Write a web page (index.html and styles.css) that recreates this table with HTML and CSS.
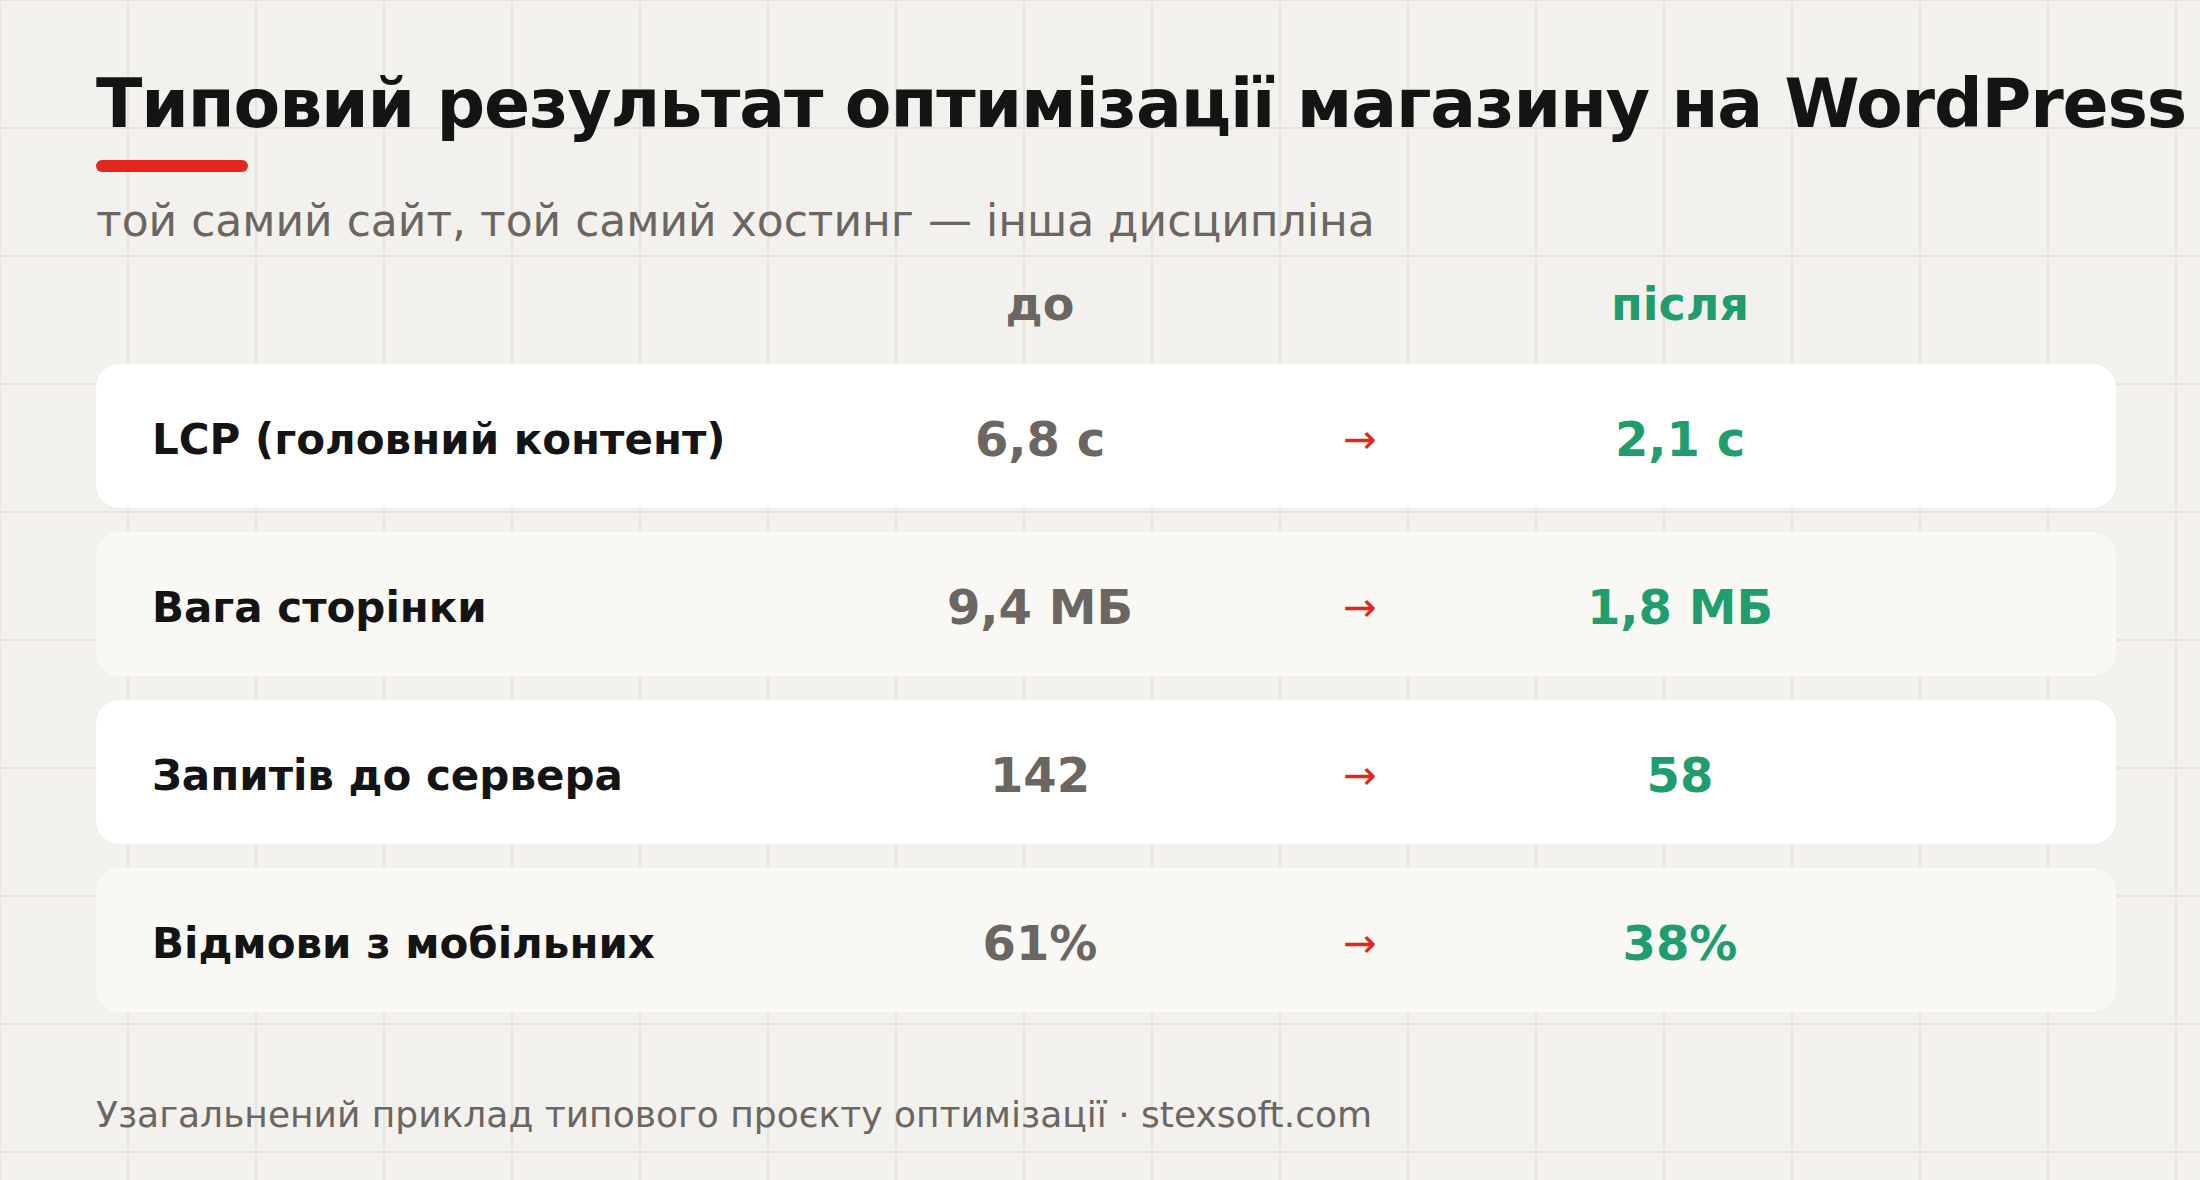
FILE: index.html
```html
<!DOCTYPE html>
<html lang="uk">
<head>
<meta charset="utf-8">
<title>Типовий результат оптимізації магазину на WordPress</title>
<link rel="stylesheet" href="styles.css">
</head>
<body>
<main class="page">
  <h1 class="title">Типовий результат оптимізації магазину на WordPress</h1>
  <div class="accent"></div>
  <p class="subtitle">той самий сайт, той самий хостинг — інша дисципліна</p>

  <div class="head-row">
    <span></span>
    <span class="col-before">до</span>
    <span></span>
    <span class="col-after">після</span>
  </div>

  <div class="rows">
    <div class="row row-light">
      <span class="label">LCP (головний контент)</span>
      <span class="before">6,8 с</span>
      <span class="arrow">→</span>
      <span class="after">2,1 с</span>
    </div>
    <div class="row row-warm">
      <span class="label">Вага сторінки</span>
      <span class="before">9,4 МБ</span>
      <span class="arrow">→</span>
      <span class="after">1,8 МБ</span>
    </div>
    <div class="row row-light">
      <span class="label">Запитів до сервера</span>
      <span class="before">142</span>
      <span class="arrow">→</span>
      <span class="after">58</span>
    </div>
    <div class="row row-warm">
      <span class="label">Відмови з мобільних</span>
      <span class="before">61%</span>
      <span class="arrow">→</span>
      <span class="after">38%</span>
    </div>
  </div>

  <p class="footer">Узагальнений приклад типового проєкту оптимізації · stexsoft.com</p>
</main>
</body>
</html>
```
FILE: styles.css
```css
* { box-sizing: border-box; }

html, body {
  margin: 0;
  padding: 0;
}

body {
  width: 2200px;
  height: 1180px;
  overflow: hidden;
  font-family: "DejaVu Sans", "Noto Sans", sans-serif;
  background-color: #f3f1ed;
  background-image:
    linear-gradient(to right, #e8e3de 2px, transparent 2px),
    linear-gradient(to bottom, #e8e3de 2px, transparent 2px);
  background-size: 128px 128px;
  background-position: -1px -1px;
}

.page {
  padding: 64px 0 0 96px;
}

.title {
  margin: 0;
  font-size: 68px;
  line-height: 80px;
  font-weight: 700;
  letter-spacing: -1.15px;
  color: #141414;
  white-space: nowrap;
}

.accent {
  margin-top: 16px;
  width: 152px;
  height: 12px;
  border-radius: 6px;
  background: #e0281f;
}

.subtitle {
  margin: 23px 0 0;
  font-size: 44px;
  line-height: 52px;
  color: #6b6661;
}

.head-row,
.row {
  display: grid;
  grid-template-columns: 728px 320px 320px 320px 1fr;
  align-items: center;
  padding: 0 56px;
  width: 2020px;
}

.head-row {
  margin-top: 33px;
  font-size: 46px;
  line-height: 48px;
  font-weight: 700;
}

.col-before { text-align: center; color: #6b6661; }
.col-after { text-align: center; color: #1f9d6d; }

.rows {
  margin-top: 36px;
  width: 2020px;
  display: flex;
  flex-direction: column;
  gap: 24px;
}

.row {
  height: 144px;
  padding-top: 6px;
  border-radius: 24px;
}

.row-light { background: #ffffff; }
.row-warm { background: #f9f8f5; }

.label {
  font-size: 42px;
  font-weight: 700;
  color: #141414;
}

.before,
.after {
  text-align: center;
  font-size: 48px;
  font-weight: 700;
}

.before { color: #6b6661; }
.after { color: #1f9d6d; }

.arrow {
  text-align: center;
  font-size: 40px;
  color: #e0281f;
}

.footer {
  margin: 82px 0 0;
  font-size: 36px;
  line-height: 42px;
  color: #6b6661;
}
```
